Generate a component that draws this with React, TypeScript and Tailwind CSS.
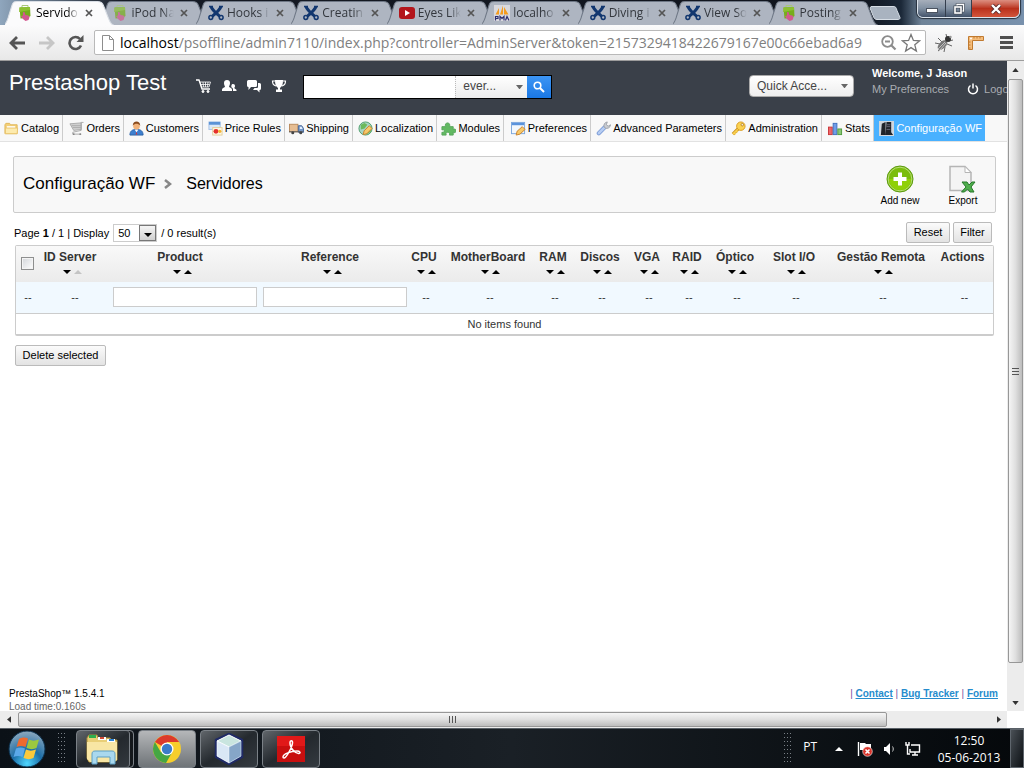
import React from "react";
import clsx from "clsx";

type IconProps = { className?: string };

// ── Favicons ────────────────────────────────────────────────────────────────

const BagIcon = ({ className }: IconProps) => (
  <svg viewBox="0 0 16 16" className={clsx("size-4 shrink-0", className)} aria-hidden="true">
    <path d="M5 3V.5h6V3" fill="none" stroke="#a9c77a" />
    <path d="M2.500 2.500L13 2l.5 9-3 2-7 .5z" fill="#76ad1c" />
    <path d="M2.500 2.500L13 2v3L2 7z" fill="#8dc032" />
    <path d="M6 7.500c1-1 2 0 2 1l.5 1.500 3 .5 1 2-1 2.500-3 1-2.500-2L4 11l2-.5z" fill="#d2588f" />
  </svg>
);

const CrossIcon = ({ className }: IconProps) => (
  <svg viewBox="0 0 16 16" className={clsx("size-4 shrink-0", className)} aria-hidden="true">
    <path d="M3 1.500C4 5 9 9 12.500 12M13 1.500C12 5 7 9 3.500 12" fill="none" stroke="#12376f" strokeWidth="3" />
    <path d="M1 1.500h4M11 1.500h4" stroke="#12376f" strokeWidth="1.500" />
    <circle cx="2.800" cy="12.500" r="1.900" fill="#aeb5c1" stroke="#12376f" strokeWidth="1.500" />
    <circle cx="13.200" cy="12.500" r="1.900" fill="#aeb5c1" stroke="#12376f" strokeWidth="1.500" />
  </svg>
);

const VideoIcon = () => (
  <svg viewBox="0 0 16 16" className="size-4 shrink-0" aria-hidden="true">
    <rect x="0" y="2" width="16" height="12" rx="3" fill="#b3151b" />
    <path d="M6 5l5 3-5 3z" fill="#fff" />
  </svg>
);

const PmaIcon = () => (
  <svg viewBox="0 0 16 16" className="size-4 shrink-0" aria-hidden="true">
    <rect width="16" height="16" fill="#d9d9de" />
    <path d="M1.500 9.500L5 3v6.500zM6 9.500l3-9v9zM10 9.500V2l4.500 7.500z" fill="#f59b1d" />
    <path d="M1.500 15.500v-4h2.500v2H1.500M6 15.500v-4l2 2 2-2v4M11.500 15.500l1.500-4 2 4" fill="none" stroke="#2e3070" strokeWidth="1.200" />
  </svg>
);

// ── Browser tabs ────────────────────────────────────────────────────────────

const TABS = [
  { label: "Servido", icon: <BagIcon />, active: true },
  { label: "iPod Na", icon: <BagIcon className="opacity-70" /> },
  { label: "Hooks i", icon: <CrossIcon /> },
  { label: "Creatin", icon: <CrossIcon /> },
  { label: "Eyes Lik", icon: <VideoIcon /> },
  { label: "localho", icon: <PmaIcon /> },
  { label: "Diving i", icon: <CrossIcon /> },
  { label: "View So", icon: <CrossIcon /> },
  { label: "Posting", icon: <BagIcon /> },
];

function Tab({ label, icon, active }: { label: string; icon: React.ReactNode; active?: boolean }) {
  return (
    <div className={clsx("relative -mr-[14px] flex h-6 min-w-0 flex-1 items-center pl-3 pr-5", active && "z-10")}>
      <svg viewBox="0 0 108 24" preserveAspectRatio="none" className="absolute inset-0 size-full" aria-hidden="true">
        <path
          d="M-3 24.500C1 24 2 20 3 17L7 4C8 1 9 .5 12 .5H91C94 .5 96 1 97 4L102 17C104 22 105 24 109 24.500z"
          fill={active ? "#fbfbfc" : "#aeb5c1"}
          stroke={active ? "#d9dee5" : "#6f7886"}
          strokeWidth="1"
        />
      </svg>
      <span className="relative">{icon}</span>
      <button
        className={clsx(
          "relative ml-[3px] w-[45px] overflow-hidden whitespace-nowrap text-left text-xs",
          "[mask-image:linear-gradient(to_right,black_70%,transparent_95%)]",
          active ? "text-black" : "text-[#33373d]",
        )}
      >
        {label}
      </button>
      <button aria-label={`Close ${label}`} className="relative ml-1">
        <svg viewBox="0 0 8 8" className="size-2">
          <path d="M1 1l6 6M7 1L1 7" stroke="#555" strokeWidth="1.700" />
        </svg>
      </button>
    </div>
  );
}

function WindowControls() {
  return (
    <div className="ml-auto mr-1 flex h-[18px] overflow-hidden rounded-b-md border border-t-0 border-[#dbe3ec] shadow-[0_0_1px_1px_#26303c]">
      <button
        aria-label="Minimize"
        className="flex w-7 items-center justify-center border-r border-[#343e4d] bg-linear-to-b from-[#a7afbb] via-[#8190a2] via-50% to-[#43536a]"
      >
        <svg viewBox="0 0 12 5" className="mt-1 w-3">
          <rect x=".5" y=".5" width="11" height="4" fill="#fff" stroke="#4b5360" />
        </svg>
      </button>
      <button
        aria-label="Restore"
        className="flex w-[26px] items-center justify-center border-r border-[#343e4d] bg-linear-to-b from-[#a7afbb] via-[#8190a2] via-50% to-[#43536a]"
      >
        <svg viewBox="0 0 12 12" className="size-3" fill="none">
          <path d="M4 3V1.500h6.500V8H9" stroke="#454d59" strokeWidth="2.500" />
          <path d="M4 3V1.500h6.500V8H9" stroke="#fff" strokeWidth="1.300" />
          <rect x="2" y="4" width="6" height="6" stroke="#454d59" strokeWidth="3" />
          <rect x="2" y="4" width="6" height="6" stroke="#fff" strokeWidth="1.600" />
        </svg>
      </button>
      <button
        aria-label="Close window"
        className="flex w-[47px] items-center justify-center bg-linear-to-b from-[#dc8e80] via-[#b9301b] via-50% to-[#d2543a]"
      >
        <svg viewBox="0 0 12 10" className="w-3" fill="none">
          <path d="M2 1l8 8M10 1L2 9" stroke="#5a2a2a" strokeWidth="4" />
          <path d="M2 1l8 8M10 1L2 9" stroke="#fff" strokeWidth="2.400" />
        </svg>
      </button>
    </div>
  );
}

function BrowserChrome() {
  return (
    <div className="flex-none font-['Open_Sans',sans-serif]">
      <div className="flex h-[25px] bg-[linear-gradient(to_right,#8fa6bd_0,#151a24_12%,#10141d_84%,#1b2838_88%,#6f8398_90%,#7891ad_100%)] pl-[5px]">
        <div className="flex w-[873px] items-end pr-[14px]">
          {TABS.map((tab) => (
            <Tab key={tab.label} {...tab} />
          ))}
        </div>
        <button aria-label="New tab" className="-ml-[9px] mt-1.5 h-[14px]">
          <svg viewBox="0 0 32 14" className="h-[14px] w-8">
            <path d="M2 .5h22c3 0 3 1 4 4l3 7c0 2-1 2-3 2H8c-2 0-3-1-4-4L1 2z" fill="#a9b3c0" stroke="#d6dde5" />
          </svg>
        </button>
        <WindowControls />
      </div>
      <div className="flex h-9 items-center border-b border-[#9c9c9c] bg-linear-to-b from-[#fbfbfc] to-[#e8e8e8] px-2">
        <div className="flex items-center gap-3">
          <button aria-label="Back">
            <svg viewBox="0 0 18 16" className="h-4 w-[18px]" fill="none" stroke="#555" strokeWidth="2.800">
              <path d="M9 2L3 8l6 6M3 8h14" />
            </svg>
          </button>
          <button aria-label="Forward">
            <svg viewBox="0 0 18 16" className="h-4 w-[18px]" fill="none" stroke="#c6c6c6" strokeWidth="2.800">
              <path d="M9 2l6 6-6 6M15 8H1" />
            </svg>
          </button>
          <button aria-label="Reload">
            <svg viewBox="0 0 16 16" className="size-4">
              <path d="M13 10.500A6 6 0 1 1 12 4" fill="none" stroke="#555" strokeWidth="2.600" />
              <path d="M15.500 0v7H8.500z" fill="#555" />
            </svg>
          </button>
        </div>
        <div className="ml-2.5 flex h-[25px] min-w-0 flex-1 items-center rounded-xs border border-[#b9b9b9] bg-white pl-[7px] pr-1">
          <svg viewBox="0 0 12 16" className="mr-1.5 h-4 w-3 shrink-0">
            <path d="M.5.5h7l4 4v11H.5zM7.500.5v4h4" fill="#fff" stroke="#8d8d8d" />
          </svg>
          <p className="min-w-0 flex-1 overflow-hidden whitespace-nowrap text-[14px] text-[#808080]">
            <span className="text-black">localhost</span>
            /psoffline/admin7110/index.php?controller=AdminServer&amp;token=2157329418422679167e00c66ebad6a9
          </p>
          <button aria-label="Zoom" className="ml-1">
            <svg viewBox="0 0 16 16" className="size-4" fill="none" stroke="#8c8c8c">
              <circle cx="6.500" cy="6.500" r="5.300" strokeWidth="1.800" />
              <path d="M4 6.500h5M10.500 10.500l4 4" strokeWidth="2.200" />
            </svg>
          </button>
          <button aria-label="Bookmark this page" className="ml-1">
            <svg viewBox="0 0 20 20" className="size-5" fill="#fff" stroke="#777" strokeWidth="1.300">
              <path d="M10 1.500l2.400 5.900 6.300.4-4.900 4 1.600 6.200-5.400-3.400L4.600 18l1.600-6.200-4.900-4 6.300-.4z" />
            </svg>
          </button>
        </div>
        <div className="ml-2 flex items-center gap-3.5">
          <button aria-label="Debugger">
            <svg viewBox="0 0 20 20" className="size-5">
              <g stroke="#555" strokeWidth=".9" fill="none">
                <path d="M1 10l5 1M4 18l4-3M10 19l1-5M4 5l4 4M12 1l1 4M19 7l-4 1M18 13l-5-2" />
              </g>
              <ellipse cx="8.500" cy="12" rx="6" ry="3.300" transform="rotate(-45 8.500 12)" fill="#777" />
              <path d="M4 16l7-7M6 17l6-7" stroke="#ddd" strokeWidth=".7" />
              <circle cx="14" cy="6" r="3" fill="#333" />
              <circle cx="16.500" cy="4" r="1.200" fill="#999" />
            </svg>
          </button>
          <button aria-label="Ruler">
            <svg viewBox="0 0 16 16" className="size-4">
              <path d="M.5 1.500h15v4h-11v9h-4z" fill="#f5bd7b" stroke="#c07a30" />
              <path d="M6 1.500v2M9 1.500v2M12 1.500v2M.5 7h2M.5 10h2M.5 13h2" stroke="#c07a30" />
              <circle cx="3" cy="3.500" r="1" fill="#fff" />
            </svg>
          </button>
          <button aria-label="Menu" className="mx-0.5">
            <svg viewBox="0 0 14 14" className="size-3.5" fill="#4f4f4f">
              <rect y="0" width="13" height="3" />
              <rect y="5" width="13" height="3" />
              <rect y="10" width="13" height="3" />
            </svg>
          </button>
        </div>
      </div>
    </div>
  );
}

// ── Shop header ─────────────────────────────────────────────────────────────

function ShopHeader() {
  return (
    <header className="flex h-[54px] flex-none items-start overflow-hidden bg-[#3a4049] pl-[9px] text-white">
      <h1 className="mt-1.5 whitespace-nowrap text-[22px] leading-8">Prestashop Test</h1>
      <div className="ml-[30px] mt-[17px] flex gap-[9px]">
        <svg viewBox="0 0 16 16" className="size-4" fill="none" stroke="#fff">
          <path d="M0 2h3l3 9h8" strokeWidth="1.300" />
          <path d="M4 4h10.500L13 9H5.500zM7 4l.5 5M9.500 4v5M12 4l-.5 5M4.500 6.500h9" strokeWidth=".8" />
          <circle cx="7" cy="13.500" r="1" fill="#fff" />
          <circle cx="12" cy="13.500" r="1" fill="#fff" />
        </svg>
        <svg viewBox="0 0 16 16" className="size-4" fill="#fff">
          <path d="M6 2c2 0 3 1 3 3 0 1.500-.5 2.500-1 3.500 0 1 3 1.500 3 3V13H1v-1.500c0-1.500 3-2 3-3C3.500 7.500 3 6.500 3 5c0-2 1-3 3-3z" />
          <path d="M12 6c1.300 0 2 .8 2 2 0 1-.5 1.500-.7 2 0 .8 2.200 1 2.200 2v1H12v-2c0-.7-1-1.500-1.700-1.700C10.500 8.500 10 6 12 6z" />
        </svg>
        <svg viewBox="0 0 16 16" className="size-4" fill="#fff">
          <path d="M2.500 2h7A1.500 1.500 0 0 1 11 3.500v4A1.500 1.500 0 0 1 9.500 9H5l-2.500 3V9A1.500 1.500 0 0 1 1 7.500v-4A1.500 1.500 0 0 1 2.500 2z" />
          <path d="M12 5h1.500A1.500 1.500 0 0 1 15 6.500v4a1.500 1.500 0 0 1-1.500 1.500v2.500L11 12H7l1.500-2H11a1 1 0 0 0 1-1z" />
        </svg>
        <svg viewBox="0 0 16 16" className="size-4" fill="#fff">
          <path d="M4 2h8c0 4-.5 6-3 8v1.500h2V14H5v-2.500h2V10C4.500 8 4 6 4 2z" />
          <path d="M4 3H1.500C1.500 6 3 7.500 5 8M12 3h2.500c0 3-1.500 4.500-3.500 5" fill="none" stroke="#fff" strokeWidth="1.200" />
        </svg>
      </div>
      <form className="ml-4 mt-[14px] flex h-6 border border-black bg-white" onSubmit={(e) => e.preventDefault()}>
        <input aria-label="Search" className="w-[151px] px-1 text-xs text-black outline-none" />
        <div className="relative border-l border-dotted border-[#bbb] bg-linear-to-b from-white to-[#ececec]">
          <select
            aria-label="Search in"
            className="block h-5 w-[71px] appearance-none pl-[7px] text-xs leading-5 text-[#444] outline-none"
          >
            <option>ever...</option>
          </select>
          <svg viewBox="0 0 8 5" className="pointer-events-none absolute right-1 top-[9px] w-[7px]" fill="#666">
            <path d="M0 0h8L4 5z" />
          </svg>
        </div>
        <button aria-label="Go" className="flex w-6 items-center justify-center bg-linear-to-b from-[#3c95f4] to-[#1a78e4]">
          <svg viewBox="0 0 12 12" className="size-3" fill="none" stroke="#fff">
            <circle cx="4.500" cy="4.500" r="3.300" strokeWidth="1.600" />
            <path d="M7 7l4 4" strokeWidth="2" />
          </svg>
        </button>
      </form>
      <div className="relative ml-auto mt-[14px]">
        <select
          aria-label="Quick access"
          className="block h-[22px] w-[105px] appearance-none rounded border border-[#aaa] bg-linear-to-b from-white to-[#eeeeee] pl-[7px] text-xs leading-5 text-[#444] outline-none"
        >
          <option>Quick Acce...</option>
        </select>
        <svg viewBox="0 0 8 5" className="pointer-events-none absolute right-1.5 top-[9px] w-[7px]" fill="#666">
          <path d="M0 0h8L4 5z" />
        </svg>
      </div>
      <div className="ml-[18px] mt-1 w-[135px] whitespace-nowrap text-[11px] leading-4">
        <p className="font-bold">Welcome, J Jason</p>
        <div className="flex items-center text-[#a9acb1]">
          <a href="#preferences">My Preferences</a>
          <span className="ml-2 mr-[9px] h-2.5 w-px bg-[#2b3038]" />
          <svg viewBox="0 0 12 12" className="mx-px size-3 shrink-0" fill="none" stroke="#fff" strokeWidth="1.500">
            <path d="M3.500 2.500a4.500 4.500 0 1 0 5 0M6 .5v5" />
          </svg>
          <a href="#logout" className="ml-1">Logout</a>
        </div>
      </div>
    </header>
  );
}

const menuIcon = (children: React.ReactNode) => (
  <svg viewBox="0 0 16 16" className="size-[15px] shrink-0" aria-hidden="true">
    {children}
  </svg>
);

const MENU = [
  {
    label: "Catalog",
    icon: menuIcon(
      <>
        <path d="M1 4l1-1.500h4L7 4h7v9.500H1z" fill="#f3cf77" stroke="#e0b65a" />
        <path d="M3 5.500h9v4H3z" fill="#fff" />
        <path d="M1.500 7.500h13l-.5 6H1.500z" fill="#fdebae" stroke="#e9c36c" />
      </>,
    ),
  },
  {
    label: "Orders",
    icon: menuIcon(
      <>
        <path d="M1 3l12-1v7l-8 1z" fill="#d0d0d0" stroke="#aaa" />
        <path d="M3 5h10M4 7h9M12.500 1.500h3M13 2v8l-9 2v2h9" fill="none" stroke="#aaa" />
        <circle cx="5" cy="14" r="1" fill="#888" />
        <circle cx="12" cy="14" r="1" fill="#888" />
      </>,
    ),
  },
  {
    label: "Customers",
    icon: menuIcon(
      <>
        <path d="M1 15c0-4 2-6 7-6s7 2 7 6z" fill="#3d7fcf" stroke="#2a62a8" />
        <path d="M6 9l2 3 2-3z" fill="#fff" />
        <circle cx="8" cy="5.500" r="3.500" fill="#f1b27a" />
        <path d="M4 5c0-3 2-4.500 4-4.500S12 2 12 5c-1-1.500-3-2-4-2s-3 .5-4 2z" fill="#8a4a1c" />
        <path d="M8 11.500l-1 3h2z" fill="#d33" />
      </>,
    ),
  },
  {
    label: "Price Rules",
    icon: menuIcon(
      <>
        <rect x="1" y="1" width="12" height="8" fill="#dce9f8" stroke="#a5c2e6" />
        <path d="M1 1h12v3H1z" fill="#5c93d6" />
        <rect x="5" y="7" width="10" height="8" fill="#fff6e0" stroke="#e2cf9c" />
        <circle cx="8.500" cy="11" r="2.600" fill="#e5302c" />
        <circle cx="12.500" cy="11" r="1.800" fill="#f5b32f" />
      </>,
    ),
  },
  {
    label: "Shipping",
    icon: menuIcon(
      <>
        <rect x=".5" y="3.500" width="9" height="8" fill="#e6bd92" stroke="#b98a5c" />
        <path d="M10 5h3.500l2 3v4H10z" fill="#7396c5" stroke="#46689a" />
        <path d="M11.500 6h2l1 2.500h-3z" fill="#e5f0ff" />
        <path d="M0 11.500h15" stroke="#555" />
        <circle cx="4" cy="12.500" r="1.600" fill="#444" />
        <circle cx="12.500" cy="12.500" r="1.600" fill="#444" />
      </>,
    ),
  },
  {
    label: "Localization",
    icon: menuIcon(
      <>
        <circle cx="8" cy="8" r="7" fill="#a8d5c4" stroke="#4f9f6c" />
        <path d="M3 4l4-2 3 2-3 4-4 1zM9 11l4-4 1 4-4 3z" fill="#6cb95b" />
        <path d="M5.500 14.500l1-4 5.500-5.500 3 3-5.500 5.500z" fill="#f7c96a" stroke="#c9812a" />
      </>,
    ),
  },
  {
    label: "Modules",
    icon: menuIcon(
      <path
        d="M1 6h4c-1-2 0-4 2-4s3 2 2 4h4v3c2-1 3 0 3 1.500S15 13 13 12v3H9c1-2-.5-3-2-3s-2 1-1.500 3H1v-3c2 .5 2.500-.5 2.500-1.500S3 9 1 9.500z"
        fill="#62b962"
        stroke="#55a55a"
      />,
    ),
  },
  {
    label: "Preferences",
    icon: menuIcon(
      <>
        <rect x=".5" y="1.500" width="14" height="12" fill="#f2f7fd" stroke="#7ba6dc" />
        <path d="M1 2h13v2.500H1z" fill="#5a93dc" />
        <path d="M5.500 15l1-4 5.500-5 3 3-5.500 5z" fill="#f7c96a" stroke="#c9812a" />
      </>,
    ),
  },
  {
    label: "Advanced Parameters",
    icon: menuIcon(
      <>
        <path d="M3 13l6-6" stroke="#7f9fd8" strokeWidth="4.500" strokeLinecap="round" />
        <path d="M3 13l6-6" stroke="#b7cdf3" strokeWidth="2.500" strokeLinecap="round" />
        <path d="M9 7a4 4 0 0 1 3-6l-1 3 2 1.500L15.500 4A4 4 0 0 1 9 7z" fill="#c9ccd2" stroke="#9da1a8" />
      </>,
    ),
  },
  {
    label: "Administration",
    icon: menuIcon(
      <>
        <path d="M8 8l-6 6" stroke="#c98f1d" strokeWidth="3.500" />
        <path d="M8 8l-6 6M3 12l2 2M5 10l2 2" stroke="#f9cf4e" strokeWidth="1.800" />
        <circle cx="10.500" cy="5.500" r="4.500" fill="#fbd251" stroke="#d79b22" />
        <circle cx="12" cy="4" r="1.300" fill="#fff" stroke="#b9811b" />
      </>,
    ),
  },
  {
    label: "Stats",
    icon: menuIcon(
      <>
        <rect x=".5" y="6.500" width="4" height="8" fill="#ee6668" stroke="#c93639" />
        <rect x="5.500" y="2.500" width="4" height="12" fill="#6f9de8" stroke="#3f6fbd" />
        <rect x="10.500" y="8.500" width="4" height="6" fill="#8ac975" stroke="#4f9a3d" />
      </>,
    ),
  },
  {
    label: "Configuração WF",
    active: true,
    icon: menuIcon(
      <>
        <rect width="16" height="16" fill="#cfd6dd" />
        <path d="M3 3l4-2v14H2zM8 1h5v11l2 3H7z" fill="#20242a" />
        <path d="M8 4h4M8 6h4M8 9h4" stroke="#667" />
      </>,
    ),
  },
];

function MainMenu() {
  return (
    <nav className="grid h-[27px] flex-none grid-cols-[63px_61px_79px_82px_68px_84px_67px_87px_135px_96px_52px_111px] border-b border-[#e2e2e2] bg-[#f8f8f8] text-[11px]">
      {MENU.map(({ label, icon, active }) => (
        <a
          key={label}
          href={`#${label}`}
          className={clsx(
            "flex items-center justify-end gap-0.5 whitespace-nowrap pr-[3px]",
            active ? "bg-[#49b1ff] text-white" : "border-r border-[#ccc] text-black",
          )}
        >
          {icon}
          {label}
        </a>
      ))}
    </nav>
  );
}

// ── Server list ─────────────────────────────────────────────────────────────

const COLUMNS = [
  { label: "ID Server", width: "w-[70px]", sorted: true, wide: true },
  { label: "Product", width: "w-[150px]", input: true, wide: true },
  { label: "Reference", width: "w-[150px]", input: true, wide: true },
  { label: "CPU", width: "w-[32px]" },
  { label: "MotherBoard", width: "w-[96px]" },
  { label: "RAM", width: "w-[34px]" },
  { label: "Discos", width: "w-[60px]" },
  { label: "VGA", width: "w-[34px]" },
  { label: "RAID", width: "w-[46px]" },
  { label: "Óptico", width: "w-[50px]" },
  { label: "Slot I/O", width: "w-[68px]" },
  { label: "Gestão Remota", width: "w-[106px]" },
  { label: "Actions", width: "w-[57px]", plain: true },
];

const BUTTON =
  "rounded-xs border border-[#bbb] bg-linear-to-b from-[#fbfbfb] to-[#e3e3e3] text-[11px] text-black";

function SortArrows({ label, sorted }: { label: string; sorted?: boolean }) {
  return (
    <div className="flex h-3.5 items-center justify-center gap-[3px]">
      <button aria-label={`Sort ${label} descending`}>
        <svg viewBox="0 0 8 4" className="h-1 w-2">
          <path d="M0 0h8L4 4z" fill="#000" />
        </svg>
      </button>
      <button aria-label={`Sort ${label} ascending`}>
        <svg viewBox="0 0 8 4" className="h-1 w-2">
          <path d="M0 4h8L4 0z" fill={sorted ? "#c4c4c4" : "#000"} />
        </svg>
      </button>
    </div>
  );
}

function ServerTable() {
  return (
    <table className="w-full table-fixed border-separate border-spacing-0 rounded-xs border border-b-2 border-[#ccc] text-[11px] text-[#333]">
      <thead>
        <tr className="h-9 bg-linear-to-b from-[#f9f9f9] to-[#ebebeb] align-top">
          <th className="w-[24px] pl-[5px] pt-[11px] text-left">
            <input
              type="checkbox"
              aria-label="Select all"
              className="block size-[13px] appearance-none border border-[#8e8f8f] bg-linear-to-br from-[#d3d6da] to-white shadow-[inset_0_0_0_1px_#f4f4f4]"
            />
          </th>
          {COLUMNS.map(({ label, width, sorted, plain, wide }) => (
            <th key={label} className={clsx("whitespace-nowrap p-0 text-xs", width, wide ? "pr-2.5" : "pr-1")}>
              <div className="-mx-2 mt-[3px] text-center">{label}</div>
              {!plain && (
                <div className="-mr-1">
                  <SortArrows label={label} sorted={sorted} />
                </div>
              )}
            </th>
          ))}
        </tr>
      </thead>
      <tbody>
        <tr className="h-8 bg-[#f1f9ff] text-center">
          <td className="border-b border-[#ccc] p-0">--</td>
          {COLUMNS.map(({ label, input }) => (
            <td key={label} className="border-b border-[#ccc] p-0">
              {input ? (
                <input
                  aria-label={`Filter ${label}`}
                  className="mx-auto mb-0.5 block h-5 w-36 border border-[#ccc] bg-white px-1 outline-none"
                />
              ) : (
                "--"
              )}
            </td>
          ))}
        </tr>
        <tr className="h-5 text-center">
          <td colSpan={14} className="p-0">No items found</td>
        </tr>
      </tbody>
    </table>
  );
}

function ServersPage() {
  return (
    <main className="pl-[13px] pr-[11px] pt-[14px] text-[11px] text-black">
      <div className="flex h-[57px] items-center rounded-xs border border-[#ccc] bg-[#f8f8f8] pl-[9px] pr-3">
        <h2 className="flex items-center pb-0.5 text-[16px]">
          <span className="text-[17px]">Configuração WF</span>
          <svg viewBox="0 0 8 10" className="ml-[9px] mr-[14px] w-2" fill="none" stroke="#888" strokeWidth="2.500">
            <path d="M1 1l5 4-5 4" />
          </svg>
          Servidores
        </h2>
        <div className="ml-auto flex gap-[21px] pt-0.5 text-[10px]">
          <button className="flex w-11 flex-col items-center whitespace-nowrap">
            <svg viewBox="0 0 28 28" className="size-7">
              <circle cx="14" cy="14" r="13" fill="#7bbd0c" stroke="#5d9a12" />
              <circle cx="14" cy="14" r="11.800" fill="none" stroke="#b9dd78" />
              <path d="M3 14a11 11 0 0 0 22 0z" fill="#8fd008" />
              <path d="M14 7.500v13M7.500 14h13" stroke="#fff" strokeWidth="4" />
            </svg>
            <span className="mt-0.5 leading-3">Add new</span>
          </button>
          <button className="flex w-10 flex-col items-center">
            <svg viewBox="0 0 28 28" className="size-7">
              <path d="M1 1.500h15l6 6v18H1z" fill="#f4f4f4" stroke="#b5b5b5" strokeWidth="1.500" />
              <path d="M16 1.500v6h6z" fill="#fff" stroke="#b5b5b5" />
              <path d="M13 17h5l2 3 3-3h3l-4 5 3 5h-4l-2.500-3-3 3h-3l4.500-5z" fill="#4fae4c" stroke="#26792b" />
            </svg>
            <span className="mt-0.5 leading-3">Export</span>
          </button>
        </div>
      </div>

      <div className="mt-[9px] flex h-[23px] items-start pl-px pr-1">
        <div className="mt-0.5 flex h-[18px] items-center whitespace-nowrap">
          <label htmlFor="pageSize">
            Page <b>1</b> / 1 | Display
          </label>
          <span className="relative mx-1 border border-[#ccc] bg-white">
            <select id="pageSize" className="block h-4 w-[42px] appearance-none pl-1 text-[11px] leading-4 outline-none">
              <option>50</option>
            </select>
            <span className="pointer-events-none absolute right-0 top-0 flex h-4 w-[17px] items-center justify-center border border-[#777] bg-linear-to-b from-[#f5f5f5] to-[#d0d0d0]">
              <svg viewBox="0 0 8 4" className="mt-1 w-2">
                <path d="M0 0h8L4 4z" />
              </svg>
            </span>
          </span>
          / 0 result(s)
        </div>
        <div className="ml-auto flex gap-[3px]">
          <button className={clsx(BUTTON, "h-[21px] w-11")}>Reset</button>
          <button className={clsx(BUTTON, "h-[21px] w-[39px]")}>Filter</button>
        </div>
      </div>

      <div className="pl-0.5 pr-1">
        <ServerTable />
        <button className={clsx(BUTTON, "mt-[9px] h-[21px] w-[91px]")}>Delete selected</button>
      </div>
    </main>
  );
}

function ShopFooter() {
  return (
    <footer className="mt-auto flex flex-none justify-between px-[9px] text-[10px] leading-[13px]">
      <div className="h-6 overflow-hidden">
        <p>PrestaShop™ 1.5.4.1</p>
        <p className="text-[#666]">Load time:0.160s</p>
      </div>
      <p className="text-[#7a4fa0]">
        {["Contact", "Bug Tracker", "Forum"].map((item) => (
          <React.Fragment key={item}>
            {" | "}
            <a href={`#${item}`} className="font-bold text-[#268ccd] underline">
              {item}
            </a>
          </React.Fragment>
        ))}
      </p>
    </footer>
  );
}

// ── Scrollbars ──────────────────────────────────────────────────────────────

function VerticalScrollbar() {
  return (
    <div className="flex w-[17px] flex-none flex-col items-center bg-[#ececec]" aria-hidden="true">
      <svg viewBox="0 0 8 5" className="my-[7px] h-1 w-[7px]">
        <path d="M0 5h8L4 0z" fill="#333" />
      </svg>
      <div className="flex w-[15px] flex-1 flex-col items-center justify-center gap-0.5 rounded-xs border border-[#979797] bg-linear-to-r from-[#f5f5f5] via-[#dfdfdf] to-[#bdbdbd]">
        <span className="h-px w-[7px] bg-[#555]" />
        <span className="h-px w-[7px] bg-[#555]" />
        <span className="h-px w-[7px] bg-[#555]" />
      </div>
      <svg viewBox="0 0 8 5" className="mb-1.5 mt-[38px] h-1 w-[7px]">
        <path d="M0 0h8L4 5z" fill="#333" />
      </svg>
    </div>
  );
}

function HorizontalScrollbar() {
  return (
    <div className="mr-[17px] flex h-[17px] flex-none items-center bg-[#ececec]" aria-hidden="true">
      <svg viewBox="0 0 5 8" className="mx-[7px] h-[7px] w-1">
        <path d="M5 0v8L0 4z" fill="#333" />
      </svg>
      <div className="flex h-[15px] flex-1 items-center justify-center gap-0.5 rounded-xs border border-[#979797] bg-linear-to-b from-[#f5f5f5] via-[#dfdfdf] to-[#bdbdbd]">
        <span className="h-[7px] w-px bg-[#555]" />
        <span className="h-[7px] w-px bg-[#555]" />
        <span className="h-[7px] w-px bg-[#555]" />
      </div>
      <svg viewBox="0 0 5 8" className="ml-[110px] mr-1.5 h-[7px] w-1">
        <path d="M0 0v8l5-4z" fill="#333" />
      </svg>
    </div>
  );
}

// ── Taskbar ─────────────────────────────────────────────────────────────────

const Grip = () => (
  <svg viewBox="0 0 8 32" className="h-8 w-2" aria-hidden="true">
    <defs>
      <pattern id="grip" width="3" height="4" patternUnits="userSpaceOnUse">
        <rect width="1" height="1" fill="#7a8087" />
      </pattern>
    </defs>
    <rect width="8" height="32" fill="url(#grip)" />
  </svg>
);

const TASKS = [
  {
    name: "Explorer",
    stacked: true,
    icon: (
      <svg viewBox="0 0 34 32" className="h-8 w-[34px]">
        <path d="M2 5l2-3h8l1 3h12l1 2h6v20l-3 2H4L2 25z" fill="#e9cf77" stroke="#a98d3a" />
        <rect x="4" y="2" width="7" height="3" fill="#2fae4e" />
        <rect x="13" y="4" width="8" height="3" fill="#fff" />
        <rect x="15" y="4" width="4" height="2" fill="#d24a35" />
        <rect x="22" y="6" width="8" height="3" fill="#fff" />
        <rect x="24" y="6" width="5" height="2" fill="#2f86d6" />
        <path d="M2 9h30v18l-3 2H5l-3-3z" fill="#f8e6a4" />
        <path d="M7 31V21c0-2 1-3 3-3h17c2 0 3 1 3 3v10h-5v-7H12v7z" fill="#a9d8ee" stroke="#5d9fc4" />
      </svg>
    ),
  },
  {
    name: "Chrome",
    active: true,
    icon: (
      <svg viewBox="0 0 28 28" className="size-7">
        <circle cx="14" cy="14" r="14" fill="#f6ce2c" />
        <path d="M14 14L1.900 7A14 14 0 0 1 26.100 7H14z" fill="#dc3a2b" />
        <path d="M1.900 7A14 14 0 0 0 13 28l6-10.500L14 14 8 17.500z" fill="#45a644" />
        <circle cx="14" cy="14" r="6.500" fill="#fff" />
        <circle cx="14" cy="14" r="5.200" fill="#3b7cc9" />
      </svg>
    ),
  },
  {
    name: "NetBeans",
    icon: (
      <svg viewBox="0 0 30 32" className="h-8 w-[30px]" stroke="#1f2a66" strokeLinejoin="round">
        <path d="M15 1l13 6v17l-13 7-13-7V7z" fill="#b9d1e6" strokeWidth="2.500" />
        <path d="M3 8l12-6 12 6-12 6z" fill="#c9e5df" stroke="#fff" />
        <path d="M3 8l12 6v16L3 23z" fill="#d9e7f5" stroke="#fff" strokeWidth=".6" />
        <path d="M27 8l-12 6v16l12-7z" fill="#86a6c8" stroke="#d7e5f2" strokeWidth=".6" />
      </svg>
    ),
  },
  {
    name: "Adobe Reader",
    icon: (
      <svg viewBox="0 0 28 26" className="h-[26px] w-7">
        <rect width="28" height="26" fill="#c80f0f" />
        <rect width="28" height="10" fill="#e11919" />
        <path
          d="M6 21c0-3 8-6 14-6 3 0 4 2 2 2.500-3 .5-9-5-9-10.500 0-3 3-3 2.500 0C15 12 9 22 7 22c-1 0-1-.5-1-1z"
          fill="none"
          stroke="#fff"
          strokeWidth="1.500"
        />
      </svg>
    ),
  },
];

function Taskbar() {
  return (
    <div className="flex h-10 flex-none items-center border-t border-[#596067] bg-linear-to-r from-[#0b1117] via-[#1a2026] to-[#05080b] pl-2 font-['Open_Sans',sans-serif] text-xs text-white">
      <button aria-label="Start">
        <svg viewBox="0 0 38 38" className="size-[38px]">
          <defs>
            <radialGradient id="orb" cx=".5" cy=".9" r=".9">
              <stop offset="0" stopColor="#4fd7ff" />
              <stop offset=".45" stopColor="#1c6ea8" />
              <stop offset="1" stopColor="#8fa9bd" />
            </radialGradient>
          </defs>
          <circle cx="19" cy="19" r="18" fill="url(#orb)" stroke="#0a2f4c" />
          <path d="M11 9c3-2 6-2 9-.5L17.500 17c-3-1.500-6-1.500-9 0z" fill="#ee6a2f" />
          <path d="M21 9.500c3 1.500 6 1.500 10 0L28.500 18c-3 1.500-6.500 1.500-10 0z" fill="#9cc840" />
          <path d="M8 18.500c3-1.500 6-1.500 9 0L14.500 27c-3-1.500-6-1.500-9 0z" fill="#5ba8e8" />
          <path d="M18 19.500c3 1.500 6.500 1.500 10 0L25.500 28c-3 1.500-6.500 1.500-10 0z" fill="#fbc93b" />
        </svg>
      </button>
      <div className="ml-3">
        <Grip />
      </div>
      <div className="ml-2.5 flex gap-1">
        {TASKS.map(({ name, icon, active, stacked }) => (
          <button
            key={name}
            aria-label={name}
            className={clsx(
              "flex h-[38px] w-[58px] items-center justify-center rounded-sm border border-[#7b8187]",
              active
                ? "bg-linear-to-b from-[#b5b7b9] to-[#6f7478]"
                : "bg-linear-to-br from-[#61666b] via-[#24292e] to-[#343a40]",
              stacked && "shadow-[inset_-3px_0_0_#14181c,inset_-4px_0_0_#7b8187]",
            )}
          >
            <span className={clsx(stacked && "mr-1.5")}>{icon}</span>
          </button>
        ))}
      </div>
      <div className="ml-auto flex h-full items-center">
        <Grip />
        <span className="ml-[11px] pb-1">PT</span>
        <svg viewBox="0 0 8 4" className="ml-[18px] h-1 w-2" fill="#fff">
          <path d="M0 4h8L4 0z" />
        </svg>
        <svg viewBox="0 0 16 16" className="ml-3.5 size-4">
          <path d="M1.500 1v14" stroke="#fff" strokeWidth="1.400" />
          <path d="M3 2h5l1 1h5v7H8L7 9H3z" fill="#fff" />
          <circle cx="10.500" cy="10.500" r="4.800" fill="#d9332a" stroke="#fff" strokeWidth=".6" />
          <path d="M8.500 8.500l4 4M12.500 8.500l-4 4" stroke="#fff" strokeWidth="1.600" />
        </svg>
        <svg viewBox="0 0 14 14" className="ml-2.5 size-3.5">
          <path d="M1 5h2l4-4v12L3 9H1z" fill="#fff" />
          <path d="M9.500 4.500c1 1.500 1 3.500 0 5" fill="none" stroke="#ccc" />
        </svg>
        <svg viewBox="0 0 16 16" className="ml-2 size-4" fill="none" stroke="#fff" strokeWidth="1.400">
          <path d="M6 4h8.500v7H5V8M7 14h6M10 11v3M1 1v3h3V1M2.500 4v9H5" />
        </svg>
        <div className="ml-4 w-16 whitespace-nowrap text-center leading-[17px]">
          <p>12:50</p>
          <p>05-06-2013</p>
        </div>
        <button
          aria-label="Show desktop"
          className="ml-[9px] h-full w-3.5 border border-[#5f666d] bg-linear-to-br from-[#4a5056] to-[#0e1216]"
        />
      </div>
    </div>
  );
}

export default function App() {
  return (
    <div className="flex h-screen w-full flex-col overflow-hidden bg-white font-['Liberation_Sans',Arial,sans-serif]">
      <BrowserChrome />
      <div className="flex min-h-0 flex-1">
        <div className="flex min-w-0 flex-1 flex-col overflow-hidden">
          <ShopHeader />
          <MainMenu />
          <ServersPage />
          <ShopFooter />
        </div>
        <VerticalScrollbar />
      </div>
      <HorizontalScrollbar />
      <Taskbar />
    </div>
  );
}
